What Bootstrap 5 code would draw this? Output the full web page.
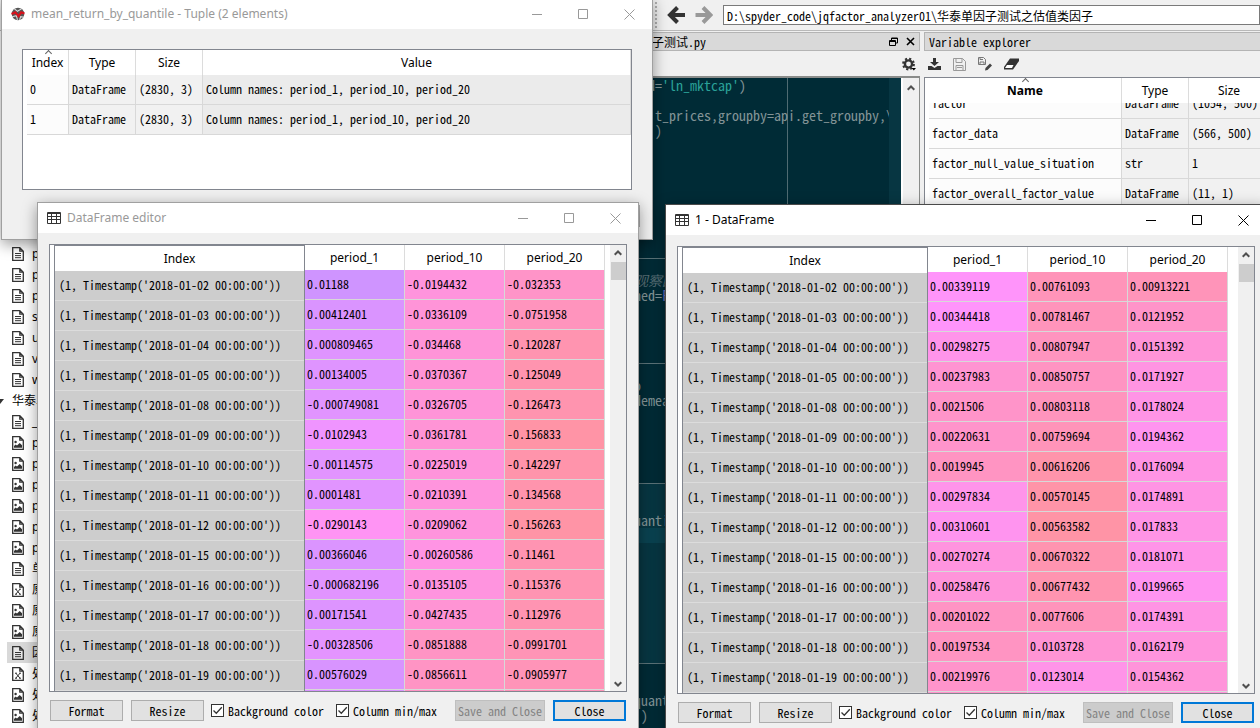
<!DOCTYPE html>
<html lang="en">
<head>
<meta charset="utf-8">
<meta name="viewport" content="width=device-width, initial-scale=1">
<title>Spyder</title>
<link href="https://cdn.jsdelivr.net/npm/bootstrap@5.3.0/dist/css/bootstrap.min.css" rel="stylesheet">
<style>
:root { --mono: "Noto Sans CJK SC", "DejaVu Sans Mono", monospace; --ui: "Noto Sans", "Noto Sans CJK SC", sans-serif; }
body { font: 12px/16px var(--mono); font-feature-settings: "hwid"; color: #000; background: #f0f0f0; }
.ui { font-family: var(--ui); font-size: 12px; font-feature-settings: normal; }
svg { display: block; flex: none; }

/* main window */
.topbar { height: 31px; border-bottom: 1px solid #b9b9b9; padding-left: 655px; gap: 10px; }
.grip { width: 2px; height: 26px; background: repeating-linear-gradient(#b0b0b0 0 2px, transparent 2px 4px); }
.path { height: 20px; border: 1px solid #7a7a7a; padding: 0 3px; background: #fff; font: inherit; font-feature-settings: inherit; color: #000; }
.panes { min-height: 0; }
.tree { width: 230px; background: #fff; padding: 212px 0 0 7px; }
.tree li { height: 21px; gap: 8px; padding-left: 5px; }
.tree li.picked { background: #d9d9d9; }
.tree .folder { padding-left: 0; margin-left: -11px; }
.dock { height: 19px; margin-top: 1px; background: #d9d9d9; border: 1px solid #b4b4b4; }
.dock.file { padding-left: 421px; }
.tools { height: 26px; }
.code { margin-top: -1px; background: #002b36; color: #839496; font-size: 14px; line-height: 15px; border-top: 2px solid #8a8c8a; }
.lines { flex: 1; background: linear-gradient(90deg, transparent 557px, #4f6b72 557px 558px, transparent 558px); }
.lines div { height: 15px; white-space: pre; padding-left: 404px; }
.lines .sep { box-shadow: inset 0 1px #5b7378; }
.lines .cell { background: #073642; }
.lines .now { background: #0a4250; }
.str { color: #2aa198; } .com { color: #586e75; font-style: italic; } .key { color: #6c71c4; }
.flags { width: 12px; background: #073642; }
.bar { width: 19px; background: #f0f0f0; padding: 7px 0 0; border-left: 2px solid #fff; border-right: 1px solid #8a8c8a; }
.explorer { width: 336px; }
.explorer .tools { gap: 12px; }
.frame { border: 1px solid #82868f; background: #fff; overflow: hidden; }

/* grids */
.grid { table-layout: fixed; border-collapse: separate; border-spacing: 0; }
.grid th { height: 25px; padding: 0; text-align: center; font-weight: 400; background: #fff; font-family: var(--ui); font-feature-settings: normal; font-size: 12px; border-right: 1px solid #dcdcdc; position: relative; }
.grid td { height: 30px; padding: 0 0 2px 2px; border-right: 1px solid #d8d8d8; border-bottom: 1px solid #d8d8d8; white-space: nowrap; overflow: hidden; }
.soft td { background: #f1f1f1; padding-left: 3px; }
.soft td:first-child { background: #fcfcfc; }
.soft td:nth-child(4) { background: #ebebeb; }
.soft th.sorted::before { content: ""; position: absolute; left: 50%; top: 1px; width: 5px; height: 5px; margin-left: -2px; border: solid #666; border-width: 1px 0 0 1px; transform: rotate(45deg); }
.vars { width: 341px; }
.cut { height: 15px; line-height: 30px; display: flex; align-items: flex-end; overflow: hidden; }
.grid tr.first td { height: 15px; padding-bottom: 0; }

/* floating windows */
.win { position: absolute; background: #f0f0f0; border: 1px solid #a0a0a0; box-shadow: 0 4px 14px rgba(0,0,0,.4); }
.win.front { border-color: #4a4a4a; }
.caption { height: 30px; background: #fff; color: #999; padding-left: 9px; gap: 6px; }
.front .caption { color: #000; }
.caption button, .dock button, .tools button, .topbar button { border: 0; background: none; padding: 0; color: inherit; }
.topbar .back { color: #333; }
.topbar .forward { color: #999; }
.caption .ctl { width: 46px; display: flex; justify-content: center; }
#tuple { left: 1px; top: -2px; width: 652px; height: 242px; }
#tuple .frame { margin: 20px 20px 0 20px; height: 141px; padding-left: 4px; }
.behind { position: absolute; right: 12px; bottom: 12px; width: 73px; height: 22px; background: #e1e1e1; border: 1px solid #adadad; }
#left { left: 37px; top: 202px; width: 602px; height: 532px; }
#right { left: 665px; top: 204px; width: 602px; height: 532px; }
.sheet { margin: 11px 11px 0; height: 448px; }
.values { width: 300px; }
.idx { border: 1px solid #82868f; margin-left: 4px; background: #cdcdcd; }
.idx th { border: 0; }
.idx td { border-right: 0; border-bottom-color: #dcdcdc; padding-left: 4px; }
.scroll { width: 16px; margin-left: auto; background: #f0f0f0; padding: 5px 0 4px; }
.thumb { width: 15px; height: 18px; background: #cdcdcd; margin-top: 6px; }
.foot { padding: 8px 12px 0; }
.foot .push { width: 73px; height: 21px; padding: 0; border: 1px solid #adadad; border-radius: 0; background: #e1e1e1; font: inherit; font-feature-settings: inherit; color: #000; }
.foot .push.wide { width: 90px; }
.foot .push:disabled { background: #ccc; border-color: #bfbfbf; color: #838383; opacity: 1; }
.foot .push.main { border: 2px solid #0078d7; }
.foot input { appearance: none; width: 13px; height: 13px; margin: 0 4px 0 0; border: 1px solid #333; background: #fff url("data:image/svg+xml,%3Csvg xmlns='http://www.w3.org/2000/svg' viewBox='0 0 11 11'%3E%3Cpath d='M1.5 5.5 4.3 8.3 9.8 2.3' fill='none' stroke='%23333' stroke-width='1.3'/%3E%3C/svg%3E"); }
.foot label { display: flex; align-items: center; margin-left: 7px; }
.foot label + label { margin-left: 12px; }
</style>
</head>
<body class="vh-100 overflow-hidden position-relative">

<svg class="d-none">
  <symbol id="i-doc" viewBox="0 0 12 14"><path d="M.7.7h7.1l3.5 3.5v9.1H.7zM7.8.7v3.5h3.5" fill="#fff" fill-opacity=".4" stroke="#333" stroke-width="1.3"/><path d="M3 6.5h6M3 8.6h6M3 10.7h6" stroke="#333"/></symbol>
  <symbol id="i-img" viewBox="0 0 12 14"><path d="M.7.7h7.1l3.5 3.5v9.1H.7zM7.8.7v3.5h3.5" fill="#fff" stroke="#333" stroke-width="1.3"/><circle cx="3.6" cy="6" r="1.2" fill="#333"/><path d="M2 11.8V10l1.6-1.6L5 9.6l2.7-2.7L10 9.2v2.6z" fill="#333"/></symbol>
  <symbol id="i-xls" viewBox="0 0 12 14"><path d="M.7.7h7.1l3.5 3.5v9.1H.7zM7.8.7v3.5h3.5" fill="#fff" stroke="#333" stroke-width="1.3"/><path d="m3.800 6.200 4.200 5M8 6.200l-4.200 5M3 6.200h2M7 6.200h2M3 11.200h2M7 11.200h2" stroke="#333"/></symbol>
  <symbol id="i-grid" viewBox="0 0 14 12"><rect width="14" height="12" rx="1" fill="#333"/><path d="M1 2h3v2H1zM5 2h4v2H5zM10 2h3v2h-3zM1 5h3v2H1zM5 5h4v2H5zM10 5h3v2h-3zM1 8h3v3H1zM5 8h4v3H5zM10 8h3v3h-3z" fill="#fff"/></symbol>
  <symbol id="i-min" viewBox="0 0 11 11"><path d="M0 5.500h10" stroke="currentColor"/></symbol>
  <symbol id="i-max" viewBox="0 0 11 11"><path d="M.5.5h9v9h-9z" fill="none" stroke="currentColor"/></symbol>
  <symbol id="i-x" viewBox="0 0 11 11"><path d="m.5.5 10 10m0-10-10 10" stroke="currentColor"/></symbol>
  <symbol id="i-up" viewBox="0 0 8 6"><path d="M.7 4.800 4 1.500l3.300 3.300" fill="none" stroke="#505050" stroke-width="2"/></symbol>
  <symbol id="i-down" viewBox="0 0 8 6"><path d="M.7 1.200 4 4.500l3.300-3.300" fill="none" stroke="#505050" stroke-width="2"/></symbol>
</svg>

<div class="d-flex flex-column h-100">
  <header class="topbar d-flex align-items-center flex-shrink-0">
    <span class="grip"></span>
    <button class="back" aria-label="Back"><svg width="18" height="18"><path d="M10.500 1.500 3 9l7.500 7.500M3.500 9H18" fill="none" stroke="currentColor" stroke-width="4"/></svg></button>
    <button class="forward" aria-label="Forward"><svg width="18" height="18"><path d="M8 1.500 15.500 9 8 16.500M15 9H.5" fill="none" stroke="currentColor" stroke-width="4"/></svg></button>
    <input class="path flex-grow-1" aria-label="Working directory" value="D:\spyder_code\jqfactor_analyzer01\华泰单因子测试之估值类因子">
  </header>
  <div class="panes d-flex flex-grow-1 overflow-hidden">
    <nav class="tree flex-shrink-0"><ul class="list-unstyled mb-0 ui" id="files"></ul></nav>
    <main class="flex-grow-1 d-flex flex-column overflow-hidden">
      <div class="dock file d-flex align-items-center flex-shrink-0 pe-1">
        <span class="me-auto">子测试.py</span>
        <button class="me-2" aria-label="Float"><svg width="9" height="9"><path d="M2.500 3V1h6v5h-2M.5 3.500h6v5h-6zM.5 4.500h6M2.500 1.500h6" fill="none" stroke="#000"/></svg></button>
        <button aria-label="Close pane"><svg width="9" height="9"><path d="m1 1 7 7m0-7L1 8" stroke="#000" stroke-width="1.600"/></svg></button>
      </div>
      <div class="tools d-flex align-items-center justify-content-end flex-shrink-0 pe-1">
        <button aria-label="Options"><svg width="14" height="14" viewBox="0 0 14 14"><circle cx="6.500" cy="7" r="3.600" fill="none" stroke="#333" stroke-width="2.400"/><circle cx="6.500" cy="7" r="5.400" fill="none" stroke="#333" stroke-width="2" stroke-dasharray="2.120"/><path d="M9.500 11H14l-2.200 2.500z" fill="#000"/></svg></button>
      </div>
      <div class="code d-flex flex-grow-1 overflow-hidden">
        <div class="lines overflow-hidden" id="lines"></div>
        <div class="flags flex-shrink-0"></div>
        <div class="bar flex-shrink-0 d-flex flex-column align-items-center"><svg width="8" height="6"><use href="#i-up"/></svg></div>
      </div>
    </main>
    <aside class="explorer flex-shrink-0 d-flex flex-column ms-1 overflow-hidden">
      <div class="dock px-1 flex-shrink-0 d-flex align-items-center border-end-0">Variable explorer</div>
      <div class="tools d-flex align-items-center flex-shrink-0 ps-1">
        <button aria-label="Import data"><svg width="13" height="13"><path d="M5 0h3v4h3L6.500 8 2 4h3zM0 8h3.500l3 2 3-2H13v4H0z" fill="#333"/></svg></button>
        <button aria-label="Save data"><svg width="13" height="13"><path d="M.5.5h9l3 3v9H.5zM3 .5v4h6v-4M3 12.500V7.500h7v5M4 9.500h5" fill="none" stroke="#999"/></svg></button>
        <button aria-label="Save data as"><svg width="14" height="14"><path d="M.5.5h5l2 2v5h-7zM2 .5v2h3M2 7.500V5h4v2.500" fill="none" stroke="#777"/><path d="m7 13.500.5-2.500L12 6.500l2 2-4.500 4.500z" fill="#444"/></svg></button>
        <button aria-label="Clear variables"><svg width="15" height="12"><path d="M6 .5h9v2.500L9 11.500H0V9z" fill="#333"/><path d="M3 7h6.500L8 10H1z" fill="#fff"/></svg></button>
      </div>
      <div class="frame flex-grow-1 ps-1 border-end-0">
        <table class="grid soft vars">
          <colgroup><col style="width:193px"><col style="width:67px"><col></colgroup>
          <thead><tr><th class="sorted fw-bold">Name</th><th>Type</th><th>Size</th></tr></thead>
          <tbody>
            <tr class="first"><td><div class="cut">factor</div></td><td><div class="cut">DataFrame</div></td><td><div class="cut">(1054, 500)</div></td></tr>
            <tr><td>factor_data</td><td>DataFrame</td><td>(566, 500)</td></tr>
            <tr><td>factor_null_value_situation</td><td>str</td><td>1</td></tr>
            <tr><td>factor_overall_factor_value</td><td>DataFrame</td><td>(11, 1)</td></tr>
          </tbody>
        </table>
      </div>
    </aside>
  </div>
</div>

<section class="win" id="tuple">
  <div class="caption d-flex align-items-center ui">
    <svg width="14" height="14" viewBox="0 0 13 13"><circle cx="6.500" cy="6.500" r="5.800" fill="#555"/><path d="M3 1.500 6 4l4-2.500M1 9l4-1 1 4M8 12l1-3 3 .5" stroke="#ddd" fill="none"/><path d="M.5 6.500 4 5l3 3.500L9.500 5l3 1" fill="none" stroke="#d8121c" stroke-width="2"/></svg>
    <span class="me-auto">mean_return_by_quantile - Tuple (2 elements)</span>
    <div class="d-flex">
      <button class="ctl" aria-label="Minimize"><svg width="11" height="11"><use href="#i-min"/></svg></button>
      <button class="ctl" aria-label="Maximize"><svg width="11" height="11"><use href="#i-max"/></svg></button>
      <button class="ctl" aria-label="Close"><svg width="11" height="11"><use href="#i-x"/></svg></button>
    </div>
  </div>
  <div class="frame">
    <table class="grid soft w-100">
      <colgroup><col style="width:42px"><col style="width:67px"><col style="width:67px"><col></colgroup>
      <thead><tr><th class="sorted">Index</th><th>Type</th><th>Size</th><th>Value</th></tr></thead>
      <tbody>
        <tr><td>0</td><td>DataFrame</td><td>(2830, 3)</td><td>Column names: period_1, period_10, period_20</td></tr>
        <tr><td>1</td><td>DataFrame</td><td>(2830, 3)</td><td>Column names: period_1, period_10, period_20</td></tr>
      </tbody>
    </table>
  </div>
  <button class="behind" aria-label="Close editor"></button>
</section>

<section class="win" id="left"></section>
<section class="win front" id="right"></section>

<script src="https://cdn.jsdelivr.net/npm/bootstrap@5.3.0/dist/js/bootstrap.bundle.min.js"></script>
<script>
const days = ['02','03','04','05','08','09','10','11','12','15','16','17','18','19'];
const editors = [
  { id: 'left', title: 'DataFrame editor', index: 251,
    // per column: hue = base + (ref - value) * slope
    hues: [[273, 0.01188, 810], [319, -0.0194, 212], [331, -0.0324, 150]],
    rows: `0.01188 -0.0194432 -0.032353
0.00412401 -0.0336109 -0.0751958
0.000809465 -0.034468 -0.120287
0.00134005 -0.0370367 -0.125049
-0.000749081 -0.0326705 -0.126473
-0.0102943 -0.0361781 -0.156833
-0.00114575 -0.0225019 -0.142297
0.0001481 -0.0210391 -0.134568
-0.0290143 -0.0209062 -0.156263
0.00366046 -0.00260586 -0.11461
-0.000682196 -0.0135105 -0.115376
0.00171541 -0.0427435 -0.112976
-0.00328506 -0.0851888 -0.0991701
0.00576029 -0.0856611 -0.0905977` },
  { id: 'right', title: '1 - DataFrame', index: 246,
    hues: [[303, 0.00339, 22000], [339, 0.0076, 5500], [339, 0.0091, 2870]],
    rows: `0.00339119 0.00761093 0.00913221
0.00344418 0.00781467 0.0121952
0.00298275 0.00807947 0.0151392
0.00237983 0.00850757 0.0171927
0.0021506 0.00803118 0.0178024
0.00220631 0.00759694 0.0194362
0.0019945 0.00616206 0.0176094
0.00297834 0.00570145 0.0174891
0.00310601 0.00563582 0.017833
0.00270274 0.00670322 0.0181071
0.00258476 0.00677432 0.0199665
0.00201022 0.0077606 0.0174391
0.00197534 0.0103728 0.0162179
0.00219976 0.0123014 0.0154362` }
];
const ctl = (label, icon) => `<button class="ctl" aria-label="${label}"><svg width="11" height="11"><use href="#${icon}"/></svg></button>`;
for (const e of editors) {
  const rows = e.rows.split('\n').map(r => r.split(' '));
  const shade = (v, c) => { const [b, ref, k] = e.hues[c]; return `background:hsl(${Math.round(b + (ref - v) * k)} 100% 79%)`; };
  const body = rows.map(r => '<tr>' + r.map((v, c) => `<td style="${shade(v, c)}">${v}</td>`).join('') + '</tr>').join('')
    + '<tr>' + rows[13].map((v, c) => `<td style="${shade(v, c)}"></td>`).join('') + '</tr>';
  document.getElementById(e.id).innerHTML = `
  <div class="caption d-flex align-items-center ui"><svg width="14" height="12"><use href="#i-grid"/></svg>
    <span class="me-auto">${e.title}</span><div class="d-flex">${ctl('Minimize', 'i-min')}${ctl('Maximize', 'i-max')}${ctl('Close', 'i-x')}</div></div>
  <div class="frame sheet d-flex align-items-start">
    <table class="grid idx flex-shrink-0" style="width:${e.index}px"><thead><tr><th>Index</th></tr></thead>
      <tbody>${days.map(d => `<tr><td>(1, Timestamp('2018-01-${d} 00:00:00'))</td></tr>`).join('')}</tbody></table>
    <table class="grid values flex-shrink-0"><thead><tr><th>period_1</th><th>period_10</th><th>period_20</th></tr></thead>
      <tbody>${body}</tbody></table>
    <div class="scroll d-flex flex-column align-items-center align-self-stretch">
      <svg width="8" height="6"><use href="#i-up"/></svg><span class="thumb"></span>
      <svg class="mt-auto" width="8" height="6"><use href="#i-down"/></svg></div>
  </div>
  <div class="foot d-flex align-items-center">
    <button class="push btn me-2">Format</button><button class="push btn">Resize</button>
    <label><input type="checkbox" checked>Background color</label>
    <label><input type="checkbox" checked>Column min/max</label>
    <button class="push btn wide ms-auto me-2" disabled>Save and Close</button><button class="push btn main">Close</button>
  </div>`;
}

const files = 'doc p,doc p,doc p,doc s,doc u,doc v,doc w,folder 华泰单,doc __,img p,img p,img p,img p,img p,img p,doc 单,xls 原,img 原,img 原,doc 因,xls 处,img 处,img 处'.split(',');
document.getElementById('files').innerHTML = files.map((f, i) => {
  const [kind, name] = f.split(' ');
  return kind === 'folder'
    ? `<li class="folder d-flex align-items-center"><svg width="8" height="6" viewBox="0 0 8 6"><path d="M0 1h8L4 6z" fill="#333"/></svg>${name}</li>`
    : `<li class="d-flex align-items-center${i === 19 ? ' picked' : ''}"><svg width="12" height="14"><use href="#i-${kind}"/></svg>${name}</li>`;
}).join('');

const src = { 0: `  d=<span class="str">'ln_mktcap'</span>)`, 2: '   t_prices,groupby=api.get_groupby,\\', 3: '   )',
  13: '<span class="com">观察因</span>', 14: 'ned=<span class="key">F</span>', 20: 'o', 21: 'demea', 29: 'uanti', 41: 'quant', 42: ' )' };
const seps = [12, 19, 27, 39];
document.getElementById('lines').innerHTML = Array.from({ length: 46 }, (_, n) =>
  `<div class="${seps.includes(n) ? 'sep ' : ''}${n === 30 ? 'now' : n >= 27 && n < 39 ? 'cell' : ''}">${src[n] || ' '}</div>`).join('');
</script>
</body>
</html>
